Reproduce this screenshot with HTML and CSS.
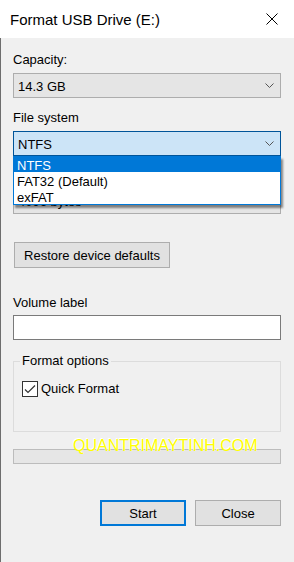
FILE: index.html
```html
<!DOCTYPE html>
<html lang="en">
<head>
    <meta charset="UTF-8">
    <meta name="viewport" content="width=device-width, initial-scale=1.0">
    <title>Format USB Drive (E:)</title>

    <link rel="stylesheet" href="styles.css">
</head>
<body>
    <div class="janela">
        <header class="barraTitulo">
            <span class="titulo">Format USB Drive (E:)</span>
            <svg class="fechar" width="12" height="12" viewBox="0 0 12 12">
                <path d="M0.5 0.5 L11.5 11.5 M11.5 0.5 L0.5 11.5" stroke="#000" stroke-width="1" fill="none"/>
            </svg>
        </header>

        <main class="conteudo">
            <label class="rotulo">Capacity:</label>
            <div class="combo">
                <span>14.3 GB</span>
                <svg class="seta" width="9" height="5" viewBox="0 0 9 5"><path d="M0.5 0.5 L4.5 4.5 L8.5 0.5" stroke="#555" fill="none"/></svg>
            </div>

            <label class="rotulo">File system</label>
            <div class="combo aberto">
                <span>NTFS</span>
                <svg class="seta" width="9" height="5" viewBox="0 0 9 5"><path d="M0.5 0.5 L4.5 4.5 L8.5 0.5" stroke="#555" fill="none"/></svg>
                <ul class="lista">
                    <li class="selecionado">NTFS</li>
                    <li>FAT32 (Default)</li>
                    <li>exFAT</li>
                </ul>
            </div>

            <!-- rotulo "Allocation unit size" fica escondido atras da lista -->
            <div class="rotulo escondido"></div>
            <div class="combo ultimo">
                <span>4096 bytes</span>
                <svg class="seta" width="9" height="5" viewBox="0 0 9 5"><path d="M0.5 0.5 L4.5 4.5 L8.5 0.5" stroke="#555" fill="none"/></svg>
            </div>

            <button class="botao restaurar">Restore device defaults</button>

            <label class="rotulo volume">Volume label</label>
            <div class="entrada"></div>

            <fieldset class="grupo">
                <legend>Format options</legend>
                <div class="opcao">
                    <span class="caixa">
                        <svg width="14" height="14" viewBox="0 0 14 14"><path d="M2 7.5 L5 10.5 L12 3.5" stroke="#333" stroke-width="1.2" fill="none"/></svg>
                    </span>
                    <span>Quick Format</span>
                </div>
            </fieldset>

            <div class="progresso"></div>

            <div class="acoes">
                <button class="botao principal">Start</button>
                <button class="botao">Close</button>
            </div>
        </main>

        <div class="marcaDagua">QUANTRIMAYTINH.COM</div>
    </div>
</body>
</html>
```

FILE: styles.css
```css
body{
    margin: 0;
    padding: 0;
    font-family: "Liberation Sans", Arial, sans-serif;
    font-size: 13px;
    color: #000;
    background-color: #f0f0f0;
}
.janela{
    width: 294px;
    height: 562px;
    position: relative;
    overflow: hidden;
    background-color: #f0f0f0;
}
.barraTitulo{
    height: 38px;
    box-sizing: border-box;
    padding: 0 16px 0 10px;
    background-color: #fff;
    display: flex;
    align-items: center;
    justify-content: space-between;
}
.titulo{
    font-size: 15px;
    margin-top: 1px;
}
.conteudo{
    height: 524px;
    box-sizing: border-box;
    border-left: 1px solid #6d6d6d;
    padding: 14px 13px 0 12px;
}
.rotulo{
    display: block;
    line-height: 16px;
    margin-bottom: 5px;
}
.escondido{
    height: 16px;
}
.combo{
    position: relative;
    height: 25px;
    box-sizing: border-box;
    border: 1px solid #adadad;
    background-color: #e5e5e5;
    display: flex;
    align-items: center;
    justify-content: space-between;
    padding: 2px 6px 0 4px;
    margin-bottom: 12px;
    line-height: 16px;
}
.combo.aberto{
    background-color: #cce4f7;
    border-color: #005499;
}
.combo.ultimo{
    margin-bottom: 28px;
    padding-top: 0;
}
.seta{
    margin-top: -2px;
}
.lista{
    position: absolute;
    top: calc(100% + 1px);
    left: -1px;
    right: -1px;
    margin: 0;
    padding: 0;
    list-style: none;
    background-color: #fff;
    border: 1px solid #0078d7;
    border-top: 0;
    box-shadow: 2px 3px 2px rgba(0, 0, 0, 0.45);
    z-index: 2;
}
.lista li{
    height: 16px;
    box-sizing: border-box;
    padding: 2px 0 0 3px;
    line-height: 15px;
}
.lista .selecionado{
    background-color: #0078d7;
    color: #fff;
}
.botao{
    font-family: inherit;
    font-size: 13px;
    color: #000;
    height: 26px;
    box-sizing: border-box;
    border: 1px solid #adadad;
    background-color: #e1e1e1;
    padding: 0;
}
.restaurar{
    display: block;
    width: 156px;
    margin-left: 1px;
}
.volume{
    margin-top: 27px;
    margin-bottom: 4px;
}
.entrada{
    height: 25px;
    box-sizing: border-box;
    border: 1px solid #7a7a7a;
    background-color: #fff;
}
.grupo{
    margin: 13px 0 0;
    padding: 12px 6px 34px;
    border: 1px solid #dcdcdc;
    min-width: 0;
}
.grupo legend{
    padding: 0 2px;
    line-height: 16px;
}
.opcao{
    display: flex;
    align-items: center;
    gap: 3px;
    line-height: 16px;
    margin-left: 2px;
}
.caixa{
    width: 16px;
    height: 16px;
    box-sizing: border-box;
    border: 1px solid #333;
    background-color: #fff;
    display: flex;
    align-items: center;
    justify-content: center;
}
.progresso{
    margin-top: 17px;
    height: 15px;
    box-sizing: border-box;
    border: 1px solid #bcbcbc;
    background-color: #e6e6e6;
}
.acoes{
    margin-top: 36px;
    display: flex;
    justify-content: flex-end;
    gap: 9px;
}
.acoes .botao{
    width: 86px;
}
.botao.principal{
    border: 2px solid #0078d7;
}
.marcaDagua{
    position: absolute;
    left: 73px;
    top: 438px;
    font-size: 16px;
    line-height: 16px;
    color: #ffff00;
    text-shadow: -1px -1px 0 #fff;
    pointer-events: none;
}
```
